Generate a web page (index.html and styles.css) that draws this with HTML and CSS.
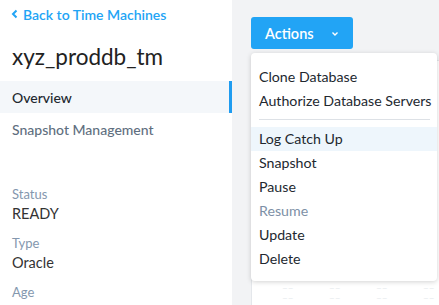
FILE: index.html
```html
<!DOCTYPE html>
<html>
<head>
<meta charset="utf-8">
<link rel="stylesheet" href="styles.css">
</head>
<body>
<div class="page">
  <aside class="sidebar">
    <a class="back"><svg class="chev" width="7" height="10" viewBox="0 0 7 10"><path d="M5.5 1.5 L2 5 L5.5 8.5" fill="none" stroke="#22a4f5" stroke-width="2"/></svg>Back to Time Machines</a>
    <h1 class="title">xyz_proddb_tm</h1>
    <nav class="nav">
      <div class="nav-item active">Overview</div>
      <div class="nav-item">Snapshot Management</div>
    </nav>
    <dl class="props">
      <dt>Status</dt><dd>READY</dd>
      <dt>Type</dt><dd>Oracle</dd>
      <dt>Age</dt>
    </dl>
  </aside>
  <main class="main">
    <div class="actions-wrap">
      <button class="actions">Actions<svg class="caret" width="8" height="6" viewBox="0 0 8 6"><path d="M1.5 1.5 L4 4 L6.5 1.5" fill="none" stroke="#fff" stroke-width="1.4"/></svg></button>
      <ul class="menu">
        <li>Clone Database</li>
        <li>Authorize Database Servers</li>
        <li class="sep"></li>
        <li class="hover">Log Catch Up</li>
        <li>Snapshot</li>
        <li>Pause</li>
        <li class="disabled">Resume</li>
        <li>Update</li>
        <li>Delete</li>
      </ul>
    </div>
    <div class="card">
      <div class="ghost"><span>–– ––</span><span>–– ––</span><span>–– ––</span><span>–– ––</span></div>
    </div>
  </main>
</div>
</body>
</html>
```
FILE: styles.css
```css
* { box-sizing: border-box; }
html, body { margin: 0; padding: 0; }
body {
  font-family: "Lato", "Open Sans", sans-serif;
  background: #f2f3f5;
  width: 439px;
  height: 305px;
  overflow: hidden;
}
.page { display: flex; height: 305px; }
.sidebar {
  width: 232px;
  flex: none;
  background: #fff;
  display: flex;
  flex-direction: column;
}
.back {
  display: flex;
  align-items: center;
  gap: 5px;
  padding: 4px 0 0 11px;
  height: 24px;
  color: #22a4f5;
  font-size: 14px;
  font-weight: 600;
}
.title {
  margin: 0;
  padding: 18px 0 0 12px;
  height: 57px;
  font-size: 22.5px;
  font-weight: 400;
  color: #222;
  line-height: 30px;
}
.nav { display: flex; flex-direction: column; margin-top: 0; }
.nav-item {
  height: 32px;
  line-height: 33px;
  padding-left: 12px;
  font-size: 14px;
  color: #5f6f80;
  font-weight: 500;
}
.nav-item.active {
  background: #f4f7fa;
  color: #22282f;
  border-right: 3px solid #1f9cf0;
}
.props { margin: 39px 0 0 12px; }
.props dt {
  font-size: 13px;
  color: #8497ae;
  height: 20px;
  line-height: 20px;
}
.props dd {
  margin: 0;
  font-size: 14.5px;
  color: #333;
  height: 29px;
  line-height: 20px;
}
.main {
  flex: 1;
  position: relative;
  padding: 17px 0 0 19px;
}
.actions-wrap { position: relative; }
.actions {
  width: 102px;
  height: 32px;
  border: none;
  border-radius: 3px;
  background: #22a4f5;
  color: #fff;
  font-family: inherit;
  font-size: 14.5px;
  font-weight: 600;
  display: flex;
  align-items: center;
  justify-content: flex-start;
  padding: 0 0 0 14px;
  gap: 17px;
}
.caret { margin-top: 1px; }
.menu {
  position: absolute;
  top: 36px;
  left: 0;
  width: 186px;
  margin: 0;
  padding: 12px 0 10px;
  list-style: none;
  background: #fff;
  border-radius: 4px;
  box-shadow: 0 1px 5px rgba(0,0,0,0.18);
  z-index: 2;
}
.menu li {
  height: 24px;
  line-height: 24px;
  padding-left: 8px;
  font-size: 14.2px;
  color: #22282f;
  white-space: nowrap;
}
.menu li.sep {
  height: 1px;
  margin: 6px 7px 7px 8px;
  background: #dde1e6;
}
.menu li.hover { background: #eef6fc; }
.menu li.disabled { color: #7d90a6; }
.card {
  position: absolute;
  left: 19px;
  top: 60px;
  right: -10px;
  bottom: -10px;
  background: #fff;
  border: 1px solid #e4e7eb;
  border-radius: 4px;
  display: flex;
  align-items: flex-end;
}
.ghost {
  display: flex;
  gap: 22px;
  padding: 0 0 12px 30px;
  color: #e8ebee;
  font-size: 10px;
  line-height: 10px;
}
```
